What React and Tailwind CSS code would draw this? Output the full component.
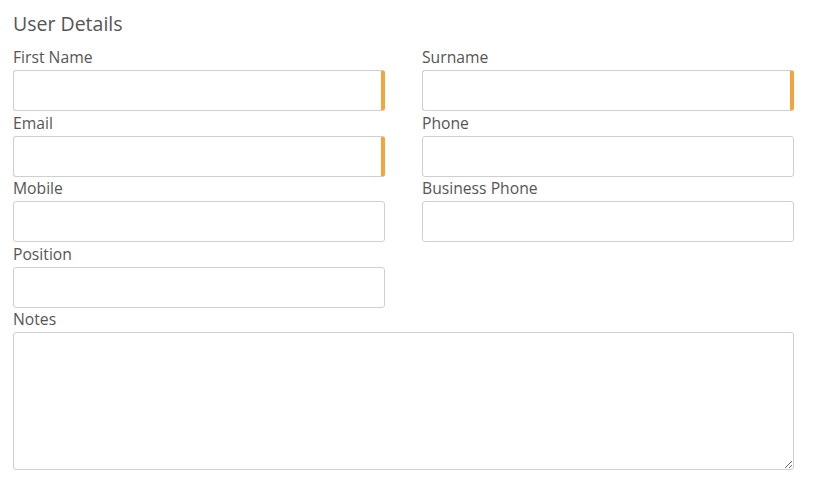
import React from 'react'

const ROWS = [
  [{ label: 'First Name', req: true }, { label: 'Surname', req: true }],
  [{ label: 'Email', req: true }, { label: 'Phone' }],
  [{ label: 'Mobile' }, { label: 'Business Phone' }],
  [{ label: 'Position' }, null],
]

function Field({ label, req }) {
  return (
    <div className="flex flex-col">
      <label className="text-[15.7px] leading-[20px] text-[#555]">{label}</label>
      <input
        className={`mt-[3px] h-[41px] w-full rounded-[3px] border border-[#cfcfcf] bg-white outline-none ${req ? 'border-r-4 border-r-[#f3a43d]' : ''}`}
      />
    </div>
  )
}

export default function App() {
  return (
    <div className="w-[818px] h-[486px] bg-white px-[13px] pt-[12px]" style={{ fontFamily: '"Open Sans", sans-serif' }}>
      <h2 className="text-[19.5px] leading-[24px] text-[#555] mb-[11px]">User Details</h2>
      <div className="w-[781px] flex flex-col gap-[1.5px]">
        {ROWS.map((row, i) => (
          <div key={i} className="grid grid-cols-2 gap-x-[37px]">
            {row.map((f, j) => (f ? <Field key={j} {...f} /> : <div key={j} />))}
          </div>
        ))}
        <div className="flex flex-col">
          <label className="text-[15.7px] leading-[20px] text-[#555]">Notes</label>
          <textarea className="mt-[3px] h-[138px] w-full rounded-[3px] border border-[#cfcfcf] bg-white outline-none resize-y" />
        </div>
      </div>
    </div>
  )
}
